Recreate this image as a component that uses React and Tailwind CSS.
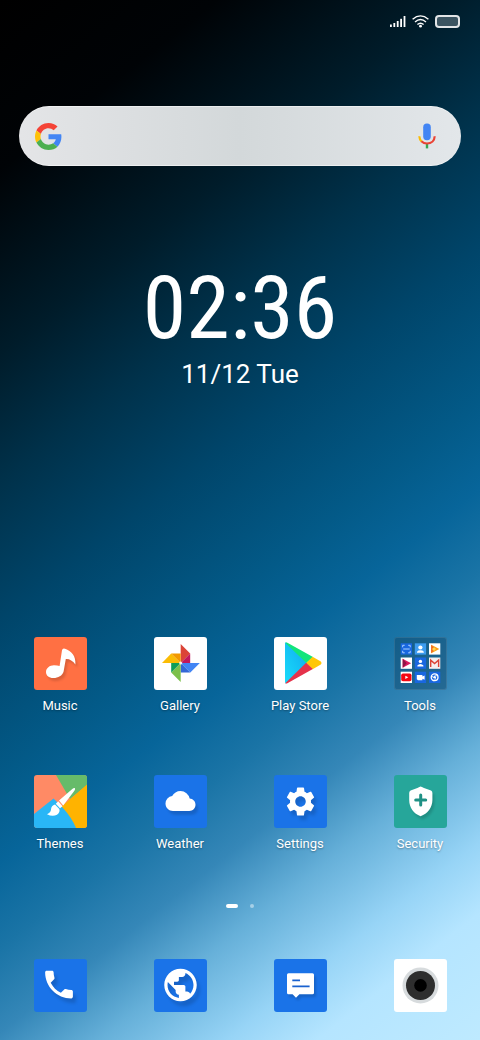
import React from "react";
import { MdCloud, MdSettings, MdPhone, MdPublic } from "react-icons/md";

const glyphShadow = "drop-shadow-[2px_3px_1px_rgba(0,0,0,0.14)]";

function Tile({ color, children }) {
  return (
    <svg viewBox="0 0 53 53" className={`block size-[53px] rounded-[3px] ${color}`} aria-hidden="true">
      {children}
    </svg>
  );
}

function MusicIcon() {
  return (
    <Tile color="bg-[#ff7043]">
      <path
        className={glyphShadow}
        fill="#fff"
        d="M25.6 29 L28 13.2 Q28.6 11 31 11.8 C37.5 14 42 19 41.4 27.5 C38.5 23.4 35 21.6 31.8 22 L29.6 34.5 C28.4 38.8 24 41 19.5 41 C14.6 41 12 38.4 12 35 C12 31 15.6 28.2 20 28.2 Q23.4 28.2 25.6 29 Z"
      />
    </Tile>
  );
}

function GalleryIcon() {
  return (
    <Tile color="bg-white">
      <path fill="#db4437" d="M26.7 7 L36.2 16.6 L26.7 26Z" />
      <path fill="#c2185b" d="M36.2 16.6 V26 H26.7Z" />
      <path fill="#fbbc05" d="M8 26 L17.2 16.6 L26.7 26Z" />
      <path fill="#f29900" d="M17.2 16.6 H26.7 V26Z" />
      <path fill="#4285f4" d="M26.7 26 H45.8 L36.3 35.5Z" />
      <path fill="#3367d6" d="M26.7 26 L36.3 35.5 H26.7Z" />
      <path fill="#7cc04b" d="M26.7 26 V45 L17.2 35.5Z" />
      <path fill="#0f9d58" d="M17.2 26 H26.7 L17.2 35.5Z" />
      <circle cx="26.7" cy="26" r="1.6" fill="#fff" opacity=".85" />
    </Tile>
  );
}

function PlayIcon() {
  return (
    <Tile color="bg-white">
      <defs>
        <linearGradient id="playCyan" x1="1" y1="0" x2="0" y2="1">
          <stop offset="0" stopColor="#10a9ee" />
          <stop offset="1" stopColor="#19dcfb" />
        </linearGradient>
      </defs>
      <path fill="url(#playCyan)" d="M11 6.5 Q11 5 12.4 5.6 L33 26 L12.4 46.2 Q11 46.6 11 45Z" />
      <path fill="#12e57b" d="M11.2 5.8 Q12 5 13.4 5.8 L39 20 L32.4 26Z" />
      <path fill="#ffc708" d="M38.6 19.8 L46.8 24.6 Q48.4 26 46.8 27.4 L38.6 32.2 L32.2 26Z" />
      <path fill="#e5334b" d="M11.2 46.2 L32.2 25.8 L38.8 32 L13.4 46.2 Q12 47 11.2 46.2Z" />
    </Tile>
  );
}

function ToolsIcon() {
  return (
    <Tile color="bg-[#0b3c5c]/40 shadow-[inset_0_0_0_1px_rgba(255,255,255,0.1)]">
      <g transform="translate(6.7 6.3)">
        <rect width="11.3" height="11.3" fill="#1967e0" />
        <path d="M2 4V2h2M7.5 2h2v2M9.5 7.5v2h-2M4 9.5H2v-2M2.5 5.7h6.5" stroke="#a9d1ff" fill="none" />
      </g>
      <g transform="translate(20.8 6.3)">
        <rect width="11.3" height="11.3" fill="#3d9cf0" />
        <circle cx="5.6" cy="4.2" r="2.1" fill="#fff" />
        <path d="M2.2 9.5V8.4Q3.4 7 5.6 7T9 8.4v1.1z" fill="#fff" />
      </g>
      <g transform="translate(35 6.3)">
        <rect width="11.3" height="11.3" fill="#fff" />
        <path d="M2.2 1.5L10.4 5.8 2.2 10z" fill="#fb9c13" />
        <path d="M2.2 1.5L6 5.8 2.2 10z" fill="#f26522" />
        <circle cx="5" cy="5.8" r="1.7" fill="#ffd54f" />
      </g>
      <g transform="translate(6.7 20.5)">
        <rect width="11.3" height="11.3" fill="#fff" />
        <path d="M2 1.2L10.4 5.8 2 10.2z" fill="#d81b60" />
        <path d="M2 1.2L6 5.8 2 10.2z" fill="#8e1444" />
      </g>
      <g transform="translate(20.8 20.5)">
        <rect width="11.3" height="11.3" fill="#1967e0" />
        <circle cx="5.6" cy="3.9" r="1.7" fill="#fff" />
        <path d="M2.6 9V8Q3.8 6.5 5.6 6.5T8.6 8v1z" fill="#fff" />
      </g>
      <g transform="translate(35 20.5)">
        <rect width="11.3" height="11.3" fill="#f4efef" />
        <path d="M1.7 9.5V2.6L5.6 6l4-3.4v6.9" fill="none" stroke="#db4437" strokeWidth="1.4" />
      </g>
      <g transform="translate(6.7 34.7)">
        <rect width="11.3" height="11.3" fill="#fff" />
        <rect x=".5" y="1.8" width="10.3" height="7.8" rx="1.8" fill="#f40612" />
        <path d="M4.6 4l3 1.6-3 1.7z" fill="#fff" />
      </g>
      <g transform="translate(20.8 34.7)">
        <rect width="11.3" height="11.3" fill="#1967e0" />
        <path d="M2 3.2h5.6v1.6l2.2-1v4.2l-2.2-1v1.6H3.2L2 7.6z" fill="#fff" />
      </g>
      <g transform="translate(35 34.7)">
        <rect width="11.3" height="11.3" fill="#1967e0" />
        <circle cx="5.6" cy="5.6" r="3.4" fill="none" stroke="#fff" strokeWidth="1.3" />
        <circle cx="5.6" cy="5.6" r="1.3" fill="#fff" />
        <path d="M5.6 4h3.2M4.4 6.2L2.8 3.8M6.8 6.4L5.2 9" stroke="#fff" strokeWidth=".7" />
      </g>
    </Tile>
  );
}

function ThemesIcon() {
  return (
    <Tile color="bg-[#ff8a65]">
      <path fill="#66bb6a" d="M22 0H53V10L36 24Z" />
      <path fill="#ffb300" d="M53 9.5V53H42L26 33Z" />
      <path fill="#29b6f6" d="M0 39L19.5 23.5L29 33Q38 43 42 53H0Z" />
      <g fill="#fff">
        <path d="M41 13.3Q40 12.6 38.6 13.8L25 25.4L29.2 30.4L40.4 15.8Q41.4 14.2 41 13.3Z" />
        <path d="M24.2 26.2L21.8 28.8L26 33.3L28.5 31.2Z" />
        <path d="M21 29.6Q17.2 30.6 17 34.6Q16.8 38 13 39.2Q18.4 42.2 23 39.8Q26.4 37.4 25.3 34.1Z" />
      </g>
    </Tile>
  );
}

function WeatherIcon() {
  return (
    <Tile color="bg-[#1a73e8]">
      <MdCloud x="11.5" y="11" size={30} color="#fff" className={glyphShadow} />
    </Tile>
  );
}

function SettingsIcon() {
  return (
    <Tile color="bg-[#1a73e8]">
      <MdSettings x="9" y="9" size={35} color="#fff" className={glyphShadow} />
    </Tile>
  );
}

function SecurityIcon() {
  return (
    <Tile color="bg-[#26a69a]">
      <path
        className={glyphShadow}
        fill="#fff"
        d="M26.6 11.5Q27.6 11.5 30 13L37 15.6Q38.4 16.2 38.4 18V25C38.4 32.6 33.6 38.6 26.6 41.2C19.6 38.6 15.2 32.6 15.2 25V18Q15.2 16.2 16.6 15.6L23.4 13Q25.8 11.5 26.6 11.5Z"
      />
      <path d="M26.7 20V30M21.7 25H31.7" stroke="#1f9185" strokeWidth="3" strokeLinecap="round" />
    </Tile>
  );
}

function PhoneIcon() {
  return (
    <Tile color="bg-[#1a73e8]">
      <MdPhone x="6.5" y="7" size={37} color="#fff" className={glyphShadow} />
    </Tile>
  );
}

function BrowserIcon() {
  return (
    <Tile color="bg-[#1a73e8]">
      <MdPublic x="7" y="6.5" size={39} color="#fff" className={glyphShadow} />
    </Tile>
  );
}

function MessagesIcon() {
  return (
    <Tile color="bg-[#1a73e8]">
      <path
        className={glyphShadow}
        fill="#fff"
        d="M14.5 14.3H38.5Q40 14.3 40 15.8V33.8Q40 35.3 38.5 35.3H25.4L22 38.8L18.6 35.3H14.5Q13 35.3 13 33.8V15.8Q13 14.3 14.5 14.3Z"
      />
      <path d="M18.3 21.4H26M18.3 27.4H35.6" stroke="#1a62cf" strokeWidth="1.9" />
    </Tile>
  );
}

function CameraIcon() {
  return (
    <Tile color="bg-white">
      <circle cx="26.5" cy="26.4" r="18" fill="#d7dbdd" />
      <circle cx="26.5" cy="26.4" r="14.5" fill="#2e2e2e" />
      <circle cx="26.5" cy="26.4" r="6.3" fill="#000" />
    </Tile>
  );
}

const apps = [
  ["Music", MusicIcon],
  ["Gallery", GalleryIcon],
  ["Play Store", PlayIcon],
  ["Tools", ToolsIcon],
  ["Themes", ThemesIcon],
  ["Weather", WeatherIcon],
  ["Settings", SettingsIcon],
  ["Security", SecurityIcon],
];

const dock = [
  ["Phone", PhoneIcon],
  ["Browser", BrowserIcon],
  ["Messages", MessagesIcon],
  ["Camera", CameraIcon],
];

function StatusBar() {
  return (
    <header className="flex items-center justify-end gap-1.5 px-5 pt-[15px]">
      <svg width="16" height="13" viewBox="0 0 16 13" fill="#fff" role="img" aria-label="Signal">
        <rect x="0" y="9.5" width="1.8" height="2.5" />
        <rect x="3.4" y="8" width="1.8" height="4" />
        <rect x="6.8" y="6" width="1.8" height="6" />
        <rect x="10.2" y="3.8" width="1.8" height="8.2" />
        <rect x="13.6" y="1" width="1.8" height="11" />
      </svg>
      <svg width="17" height="13" viewBox="0 0 17 13" fill="none" stroke="#fff" strokeWidth="1.4" role="img" aria-label="Wi-Fi">
        <path d="M.6 4.2Q8.5-2.4 16.4 4.2M3 7Q8.5 2.2 14 7M5.4 9.6Q8.5 6.8 11.6 9.6" />
        <circle cx="8.5" cy="11.2" r="1.4" fill="#fff" stroke="none" />
      </svg>
      <span className="h-[13px] w-[25px] rounded border-2 border-white/85 bg-[#3b5461]" role="img" aria-label="Battery" />
    </header>
  );
}

function SearchBar() {
  return (
    <form
      className="mx-[19px] mt-[78px] flex h-[60px] items-center rounded-full border-y border-white/50 bg-linear-to-r from-[#e4e5e7] via-[#d3d8da] to-[#e3e7ea] px-4"
      onSubmit={(e) => e.preventDefault()}
    >
      <svg viewBox="0 0 48 48" className="size-[27px] shrink-0" aria-hidden="true">
        <path fill="#f44336" d="M24 9.5c3.54 0 6.71 1.22 9.21 3.6l6.85-6.85C35.9 2.38 30.47 0 24 0 14.62 0 6.51 5.38 2.56 13.22l7.98 6.19C12.43 13.72 17.74 9.5 24 9.5z" />
        <path fill="#4285f4" d="M46.98 24.55c0-1.57-.15-3.09-.38-4.55H24v9.02h12.94c-.58 2.96-2.26 5.48-4.78 7.18l7.73 6c4.51-4.18 7.09-10.36 7.09-17.65z" />
        <path fill="#ffc107" d="M10.53 28.59c-.48-1.45-.76-2.99-.76-4.59s.27-3.14.76-4.59l-7.98-6.19C.92 16.46 0 20.12 0 24c0 3.88.92 7.54 2.56 10.78l7.97-6.19z" />
        <path fill="#4caf50" d="M24 48c6.48 0 11.93-2.13 15.89-5.81l-7.73-6c-2.15 1.45-4.92 2.3-8.16 2.3-6.26 0-11.57-4.22-13.47-9.91l-7.98 6.19C6.51 42.62 14.62 48 24 48z" />
      </svg>
      <input type="search" aria-label="Search" className="mx-3 h-10 min-w-0 flex-1 bg-transparent text-base text-gray-800 outline-none" />
      <button type="button" aria-label="Voice search" className="mr-2 shrink-0">
        <svg width="20" height="26" viewBox="0 0 20 26" fill="none" className="block">
          <rect x="6.2" y=".6" width="7.6" height="16.6" rx="3.6" fill="#4285f4" />
          <path d="M10 20.5V25.4" stroke="#34a853" strokeWidth="2.4" />
          <path d="M2.3 13.2Q2.5 16.4 4.6 18.5" stroke="#fbbc05" strokeWidth="2.2" />
          <path d="M4.4 18.3Q6.7 20.5 10 20.5C14.5 20.5 17.5 17.5 17.7 13.2" stroke="#ea4335" strokeWidth="2.2" />
        </svg>
      </button>
    </form>
  );
}

export default function App() {
  return (
    <main className="flex min-h-screen flex-col bg-[linear-gradient(142deg,#000000_0%,#000306_12%,#001c2a_25%,#00314a_34%,#00456a_44%,#035a88_55%,#07659a_61%,#1a74a6_67%,#3587b8_73%,#66b0d9_79%,#97d4f6_86%,#b5e5ff_91%,#beeaff_100%)] font-['Roboto',sans-serif] text-white">
      <StatusBar />
      <SearchBar />
      <section className="mt-[92px] mb-12 flex flex-col items-center">
        <time className="font-['Roboto_Condensed','Roboto',sans-serif] text-[88px] leading-[100px]">02:36</time>
        <p className="text-[26px] leading-8">11/12 Tue</p>
      </section>
      <nav aria-label="Apps" className="mt-auto grid grid-cols-4 gap-y-[60px]">
        {apps.map(([name, Icon]) => (
          <button key={name} type="button" className="flex flex-col items-center gap-[7px]">
            <Icon />
            <span className="text-[13px] leading-[18px] text-shadow-[0_1px_2px_rgb(0_0_0/0.35)]">{name}</span>
          </button>
        ))}
      </nav>
      <div className="mt-[51px] flex items-center justify-center gap-3">
        <span className="h-1 w-3 rounded-full bg-white" />
        <span className="size-1 rounded-full bg-white/45" />
      </div>
      <nav aria-label="Dock" className="mt-[51px] grid grid-cols-4 pb-7">
        {dock.map(([name, Icon]) => (
          <button key={name} type="button" aria-label={name} className="flex justify-center">
            <Icon />
          </button>
        ))}
      </nav>
    </main>
  );
}
